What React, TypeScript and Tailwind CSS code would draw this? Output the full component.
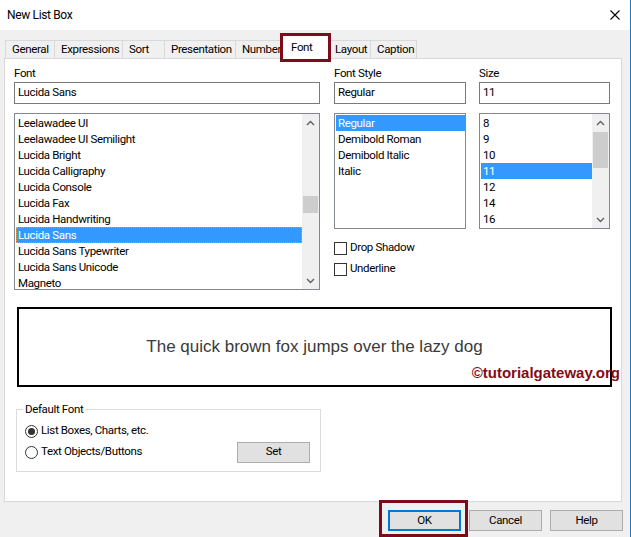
import React from 'react';

const fonts = [
    'Leelawadee UI',
    'Leelawadee UI Semilight',
    'Lucida Bright',
    'Lucida Calligraphy',
    'Lucida Console',
    'Lucida Fax',
    'Lucida Handwriting',
    'Lucida Sans',
    'Lucida Sans Typewriter',
    'Lucida Sans Unicode',
    'Magneto',
];

const styles = ['Regular', 'Demibold Roman', 'Demibold Italic', 'Italic'];
const sizes = ['8', '9', '10', '11', '12', '14', '16'];

function Chevron({ down }: { down?: boolean }) {
    return (
        <svg width="9" height="6" viewBox="0 0 9 6" className="text-[#606060]">
            <polyline
                points={down ? '1,1 4.5,4.5 8,1' : '1,5 4.5,1.5 8,5'}
                fill="none"
                stroke="currentColor"
                strokeWidth="1.4"
            />
        </svg>
    );
}

function ScrollBar({ thumb }: { thumb: string }) {
    return (
        <div className="w-[17px] shrink-0 bg-[#f0f0f0] flex flex-col">
            <div className="h-[17px] flex items-center justify-center">
                <Chevron />
            </div>
            <div className="flex-1 px-[1px]">
                <div className={`bg-[#cdcdcd] ${thumb}`}></div>
            </div>
            <div className="h-[17px] flex items-center justify-center">
                <Chevron down />
            </div>
        </div>
    );
}

function ListBox({
    items,
    selected,
    height,
    thumb,
    focus,
}: {
    items: string[];
    selected: string;
    height: string;
    thumb?: string;
    focus?: boolean;
}) {
    return (
        <div className={`flex border border-[#828790] bg-white overflow-hidden ${height}`}>
            <div className="flex-1 p-[1px] pr-0">
                {items.map((item) => (
                    <div
                        key={item}
                        className={
                            item === selected
                                ? `h-[16px] leading-[16px] pl-[2px] bg-[#3399ff] text-white ${focus ? 'outline outline-1 outline-dotted outline-[#d8a050] -outline-offset-1' : ''}`
                                : 'h-[16px] leading-[16px] pl-[2px]'
                        }
                    >
                        {item}
                    </div>
                ))}
            </div>
            {thumb && <ScrollBar thumb={thumb} />}
        </div>
    );
}

function TextBox({ value }: { value: string }) {
    return (
        <div className="mt-[1px] h-[22px] border border-[#7a7a7a] bg-white px-[3px] flex items-center">
            {value}
        </div>
    );
}

function CheckRow({ label, className }: { label: string; className: string }) {
    return (
        <div className={`flex items-center h-[16px] ${className}`}>
            <div className="w-[13px] h-[13px] border border-[#333] bg-white"></div>
            <span className="ml-[3px]">{label}</span>
        </div>
    );
}

function Radio({ checked, label }: { checked?: boolean; label: string }) {
    return (
        <div className="flex items-center">
            <div className="w-[13px] h-[13px] rounded-full border border-[#333] bg-white flex items-center justify-center">
                {checked && <div className="w-[7px] h-[7px] rounded-full bg-[#333]"></div>}
            </div>
            <span className="ml-[3px]">{label}</span>
        </div>
    );
}

const tabs = [
    { name: 'General', w: 'w-[50px]' },
    { name: 'Expressions', w: 'w-[69px]' },
    { name: 'Sort', w: 'w-[43px]' },
    { name: 'Presentation', w: 'w-[72px]' },
    { name: 'Number', w: 'w-[49px]' },
    { name: 'Font', w: 'w-[45px]' },
    { name: 'Layout', w: 'w-[43px]' },
    { name: 'Caption', w: 'w-[47px]' },
];

export default function App() {
    return (
        <div className="w-[631px] h-[537px] bg-[#f0f0f0] border-r border-[#1979ca] flex flex-col overflow-hidden text-[11.5px] tracking-[-0.35px] text-black font-['Roboto','Liberation_Sans',sans-serif]">
            {/* title bar */}
            <div className="h-[30px] shrink-0 bg-white flex items-center justify-between pl-[7px] pr-[10px]">
                <span className="text-[12px]">New List Box</span>
                <svg width="10" height="10" viewBox="0 0 10 10">
                    <path d="M0.5 0.5 L9.5 9.5 M9.5 0.5 L0.5 9.5" stroke="#000" strokeWidth="1.1" />
                </svg>
            </div>

            {/* tabs */}
            <div className="h-[28px] shrink-0 flex items-end pl-[5px]">
                {tabs.map((t) =>
                    t.name === 'Font' ? (
                        <div
                            key={t.name}
                            className={`${t.w} h-[23px] -mb-px relative z-10 bg-white pl-[8px] flex items-center outline-[3px] outline-solid outline-[#7d0b1b]`}
                        >
                            {t.name}
                        </div>
                    ) : (
                        <div
                            key={t.name}
                            className={`${t.w} h-[18px] border-l border-t border-r border-[#d9d9d9] -mr-px bg-[#f0f0f0] pl-[6px] flex items-center whitespace-nowrap`}
                        >
                            {t.name}
                        </div>
                    )
                )}
            </div>

            {/* tab panel */}
            <div className="ml-[4px] w-[618px] h-[444px] shrink-0 bg-white border border-[#d9d9d9] flex flex-col">
                <div className="flex pl-[9px] pt-[6px]">
                    <div className="w-[306px]">
                        <div className="h-[16px] leading-[16px]">Font</div>
                        <TextBox value="Lucida Sans" />
                        <div className="mt-[9px]">
                            <ListBox
                                items={fonts}
                                selected="Lucida Sans"
                                height="h-[177px]"
                                thumb="mt-[65px] h-[17px]"
                                focus
                            />
                        </div>
                    </div>
                    <div className="w-[132px] ml-[14px]">
                        <div className="h-[16px] leading-[16px]">Font Style</div>
                        <TextBox value="Regular" />
                        <div className="mt-[9px]">
                            <ListBox items={styles} selected="Regular" height="h-[116px]" />
                        </div>
                        <CheckRow label="Drop Shadow" className="mt-[11px]" />
                        <CheckRow label="Underline" className="mt-[5px]" />
                    </div>
                    <div className="w-[131px] ml-[13px]">
                        <div className="h-[16px] leading-[16px]">Size</div>
                        <TextBox value="11" />
                        <div className="mt-[9px]">
                            <ListBox
                                items={sizes}
                                selected="11"
                                height="h-[116px]"
                                thumb="mt-[1px] h-[36px]"
                            />
                        </div>
                    </div>
                </div>

                {/* preview */}
                <div className="relative mt-[17px] ml-[12px] w-[595px] h-[80px] border-2 border-black flex items-center justify-center tracking-normal">
                    <span className="text-[17px] text-[#3a3a3a] font-['Liberation_Sans',sans-serif]">
                        The quick brown fox jumps over the lazy dog
                    </span>
                    <span className="absolute -right-[10px] top-[53px] text-[15px] font-bold text-[#860b17] font-['Liberation_Sans',sans-serif]">
                        ©tutorialgateway.org
                    </span>
                </div>

                {/* default font group */}
                <fieldset className="mt-[14px] ml-[11px] w-[305px] border border-[#dcdcdc] pl-[8px] pr-[10px] pb-[8px]">
                    <legend className="-ml-[2px] px-[2px] leading-[16px]">Default Font</legend>
                    <div className="mt-[6px] h-[16px] flex items-center">
                        <Radio checked label="List Boxes, Charts, etc." />
                    </div>
                    <div className="mt-[2px] h-[22px] flex items-center justify-between">
                        <Radio label="Text Objects/Buttons" />
                        <button className="w-[73px] h-[21px] bg-[#e1e1e1] border border-[#adadad]">Set</button>
                    </div>
                </fieldset>
            </div>

            {/* dialog buttons */}
            <div className="flex justify-end gap-[8px] pr-[7px] mt-[8px]">
                <div className="relative">
                    <button className="w-[73px] h-[21px] bg-[#e1e1e1] border-2 border-[#0078d7]">OK</button>
                    <div className="absolute -left-[9px] -right-[7px] -top-[10px] -bottom-[6px] border-[3px] border-[#7d0b1b]"></div>
                </div>
                <button className="w-[73px] h-[21px] bg-[#e1e1e1] border border-[#adadad]">Cancel</button>
                <button className="w-[73px] h-[21px] bg-[#e1e1e1] border border-[#adadad]">Help</button>
            </div>
        </div>
    );
}
